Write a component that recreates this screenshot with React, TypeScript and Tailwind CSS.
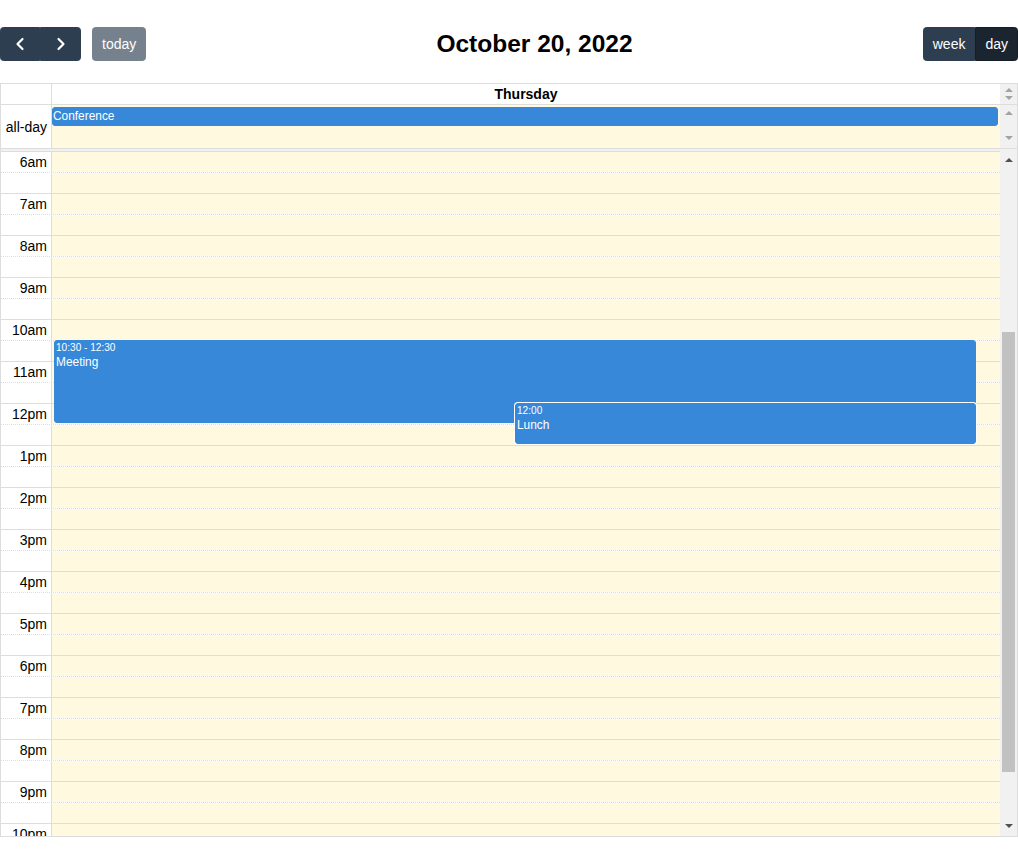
import React from 'react';

// the view opens scrolled to 6am, so only the hours from there down are drawn
const hours = Array.from({ length: 18 }, (_, i) => i + 6);

function hourLabel(h: number) {
  if (h === 0) return '12am';
  if (h < 12) return `${h}am`;
  if (h === 12) return '12pm';
  return `${h - 12}pm`;
}

function Chevron({ dir }: { dir: 'left' | 'right' }) {
  return (
    <svg width="20" height="20" viewBox="0 0 24 24" fill="none" stroke="currentColor" strokeWidth="2.6" strokeLinecap="round" strokeLinejoin="round">
      {dir === 'left' ? <path d="m15 18-6-6 6-6" /> : <path d="m9 18 6-6-6-6" />}
    </svg>
  );
}

function Arrow({ up, dark }: { up: boolean; dark?: boolean }) {
  return (
    <svg width="8" height="4" viewBox="0 0 8 4" className="shrink-0">
      <polygon points={up ? '0,4 8,4 4,0' : '0,0 8,0 4,4'} fill={dark ? '#505050' : '#a3a3a3'} />
    </svg>
  );
}

// classic scrollbar look, drawn by hand
function Gutter({ pad, thumbTop, thumbHeight, dark }: { pad: string; thumbTop?: number; thumbHeight?: number; dark?: boolean }) {
  return (
    <div className={`relative flex w-[17px] shrink-0 flex-col items-center justify-between bg-[#f1f1f1] ${pad}`}>
      <Arrow up dark={dark} />
      {thumbHeight ? (
        <div className="absolute left-[2px] right-[2px] bg-[#c1c1c1]" style={{ top: thumbTop, height: thumbHeight }} />
      ) : null}
      <Arrow up={false} dark={dark} />
    </div>
  );
}

function Toolbar() {
  return (
    <div className="flex items-center justify-between pt-[27px] mb-[22px]">
      <div className="flex items-center">
        <div className="flex">
          <button className="flex h-[34px] w-[40px] items-center justify-center rounded-l-[3.5px] border border-[#2c3e50] bg-[#2c3e50] text-white">
            <Chevron dir="left" />
          </button>
          <button className="flex h-[34px] w-[41px] items-center justify-center rounded-r-[3.5px] border border-[#2c3e50] bg-[#2c3e50] text-white">
            <Chevron dir="right" />
          </button>
        </div>
        <button className="ml-[11px] h-[34px] rounded-[3.5px] border border-[#2c3e50] bg-[#2c3e50] px-[9px] text-[14px] leading-[21px] text-white opacity-65">
          today
        </button>
      </div>
      <h2 className="text-[24.5px] font-bold leading-[30px] text-black">October 20, 2022</h2>
      <div className="flex">
        <button className="h-[34px] rounded-l-[3.5px] border border-[#2c3e50] bg-[#2c3e50] px-[9px] text-[14px] leading-[21px] text-white">
          week
        </button>
        <button className="h-[34px] rounded-r-[3.5px] border border-[#151e27] bg-[#1a252f] px-[9px] text-[14px] leading-[21px] text-white">
          day
        </button>
      </div>
    </div>
  );
}

function TimeGrid() {
  const rows = [];
  for (const h of hours) {
    rows.push(
      <div key={`${h}-a`} className="flex h-[21px] border-t border-solid border-[#ddd]">
        <div className="w-[51px] shrink-0 border-r border-[#ddd] pr-[4px] text-right leading-[21px]">
          {hourLabel(h)}
        </div>
        <div className="flex-1 bg-[#fffadf]" />
      </div>
    );
    rows.push(
      <div key={`${h}-b`} className="flex h-[21px] border-t border-dotted border-[#ddd]">
        <div className="w-[51px] shrink-0 border-r border-[#ddd]" />
        <div className="flex-1 bg-[#fffadf]" />
      </div>
    );
  }

  return (
    <div className="flex h-[685px]">
      <div className="flex-1 overflow-hidden">
        <div className="relative">
          {rows}
          {/* events lie over the slot lanes */}
          <div className="absolute inset-y-0 left-[51px] right-0">
            <div className="absolute left-[2px] right-[2.5%] top-[189px] h-[83px] overflow-hidden rounded-[3px] border border-[#3788d8] bg-[#3788d8] px-[1px] text-white">
              <div className="mt-[1px] text-[10.1px] leading-[12px]">10:30 - 12:30</div>
              <div className="mt-[1px] text-[11.9px] leading-[14px]">Meeting</div>
            </div>
            <div className="absolute left-[463px] right-[2.5%] top-[252px] h-[41px] overflow-hidden rounded-[3px] border border-[#3788d8] bg-[#3788d8] px-[1px] text-white shadow-[0_0_0_1px_#fff]">
              <div className="mt-[1px] text-[10.1px] leading-[12px]">12:00</div>
              <div className="mt-[1px] text-[11.9px] leading-[14px]">Lunch</div>
            </div>
          </div>
        </div>
      </div>
      <Gutter dark pad="pt-[7px] pb-[8px]" thumbTop={181} thumbHeight={440} />
    </div>
  );
}

export default function App() {
  return (
    <div className="w-[1018px] bg-white font-['Liberation_Sans',Arial,sans-serif] text-[14px] text-black">
      <Toolbar />
      <div className="border border-[#ddd]">
        <div className="flex h-[21px] border-b border-[#ddd]">
          <div className="w-[51px] shrink-0 border-r border-[#ddd]" />
          <div className="flex-1 text-center font-bold leading-[20px]">Thursday</div>
          <Gutter pad="pt-[4px] pb-[4px]" />
        </div>
        <div className="flex h-[44px] border-b border-[#ddd]">
          <div className="flex w-[51px] shrink-0 items-center justify-end border-r border-[#ddd] pr-[4px] pt-[2px]">
            all-day
          </div>
          <div className="flex-1 bg-[#fffadf] pt-[2px]">
            <div className="mr-[2px] h-[19px] rounded-[3px] border border-[#3788d8] bg-[#3788d8] text-[11.9px] leading-[17px] text-white">
              Conference
            </div>
          </div>
          <Gutter pad="pt-[6px] pb-[8px]" />
        </div>
        <div className="h-[2px] bg-[#f1f1f1]" />
        <TimeGrid />
      </div>
    </div>
  );
}
